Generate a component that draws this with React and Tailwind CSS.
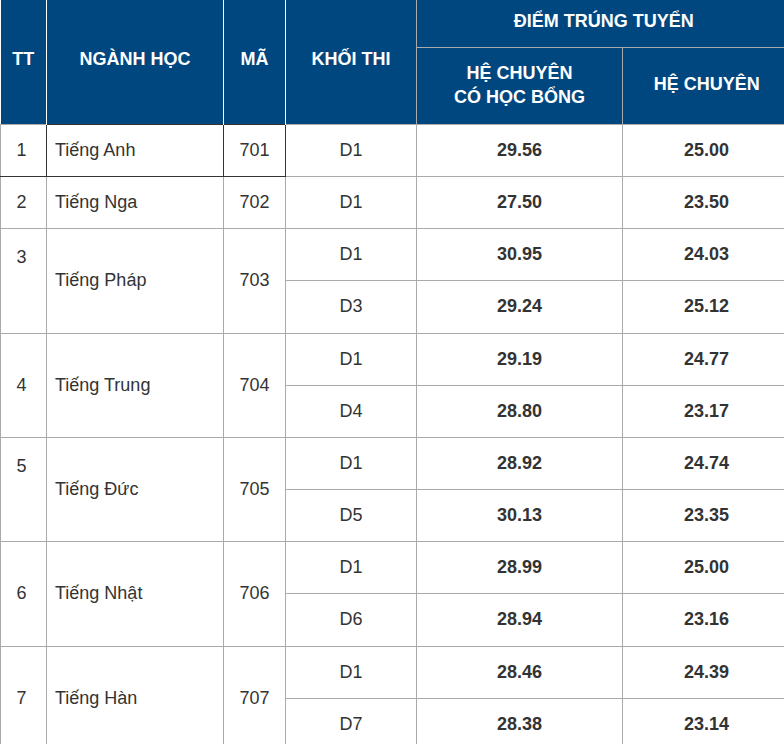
import * as React from "react";

const rows = [
  { tt: "1", name: "Tiếng Anh", code: "701", items: [["D1", "29.56", "25.00"]], selected: true },
  { tt: "2", name: "Tiếng Nga", code: "702", items: [["D1", "27.50", "23.50"]] },
  { tt: "3", name: "Tiếng Pháp", code: "703", top: true, items: [["D1", "30.95", "24.03"], ["D3", "29.24", "25.12"]], tall: 1 },
  { tt: "4", name: "Tiếng Trung", code: "704", items: [["D1", "29.19", "24.77"], ["D4", "28.80", "23.17"]] },
  { tt: "5", name: "Tiếng Đức", code: "705", top: true, items: [["D1", "28.92", "24.74"], ["D5", "30.13", "23.35"]] },
  { tt: "6", name: "Tiếng Nhật", code: "706", items: [["D1", "28.99", "25.00"], ["D6", "28.94", "23.16"]], tall: 1 },
  { tt: "7", name: "Tiếng Hàn", code: "707", items: [["D1", "28.46", "24.39"], ["D7", "28.38", "23.14"]] },
];

const cell = "border border-[#aaaaaa] p-0 text-center align-middle";

export default function App() {
  return (
    <div className="w-[784px] h-[744px] overflow-hidden bg-white font-['Liberation_Sans',Arial,sans-serif] text-[18px] text-[#333333]">
      <table className="table-fixed border-collapse w-[790px]">
        <colgroup>
          <col className="w-[46px]" />
          <col className="w-[177px]" />
          <col className="w-[62px]" />
          <col className="w-[131px]" />
          <col className="w-[206px]" />
          <col className="w-[168px]" />
        </colgroup>
        <thead className="bg-[#00477f] text-white font-bold">
          <tr className="h-[47px]">
            <th rowSpan={2} className="border-r border-white p-0 pb-1 font-bold">TT</th>
            <th rowSpan={2} className="border-r border-white p-0 pb-1 font-bold">NGÀNH HỌC</th>
            <th rowSpan={2} className="border-r border-white p-0 pb-1 font-bold">MÃ</th>
            <th rowSpan={2} className="border-r border-[#aaaaaa] p-0 pb-1 font-bold">KHỐI THI</th>
            <th colSpan={2} className="border-b border-[#aaaaaa] p-0 pb-1 font-bold">ĐIỂM TRÚNG TUYỂN</th>
          </tr>
          <tr className="h-[77px]">
            <th className="border-r border-[#aaaaaa] p-0 pb-0.5 font-bold leading-6">
              HỆ CHUYÊN
              <br />
              CÓ HỌC BỔNG
            </th>
            <th className="p-0 pb-0.5 font-bold">HỆ CHUYÊN</th>
          </tr>
        </thead>
        <tbody>
          {rows.map((r) =>
            r.items.map((it, i) => (
              <tr key={r.tt + it[0]} className={r.tall === 1 && i === 1 ? "h-[53px]" : "h-[52px]"}>
                {i === 0 && (
                  <>
                    <td
                      rowSpan={r.items.length}
                      className={`${cell} pr-1 ${r.top ? "!align-top pt-[15px]" : ""} ${r.selected ? "border-b-[#333333] border-r-[#333333]" : ""}`}
                    >
                      {r.tt}
                    </td>
                    <td
                      rowSpan={r.items.length}
                      className={`${cell} !text-left pl-2 ${r.selected ? "!border-[#333333] border-t-[#00477f]" : ""}`}
                    >
                      {r.name}
                    </td>
                    <td
                      rowSpan={r.items.length}
                      className={`${cell} ${r.selected ? "!border-[#333333] border-t-[#00477f]" : ""}`}
                    >
                      {r.code}
                    </td>
                  </>
                )}
                <td className={cell}>{it[0]}</td>
                <td className={`${cell} font-bold`}>{it[1]}</td>
                <td className={`${cell} font-bold`}>{it[2]}</td>
              </tr>
            ))
          )}
        </tbody>
      </table>
    </div>
  );
}
